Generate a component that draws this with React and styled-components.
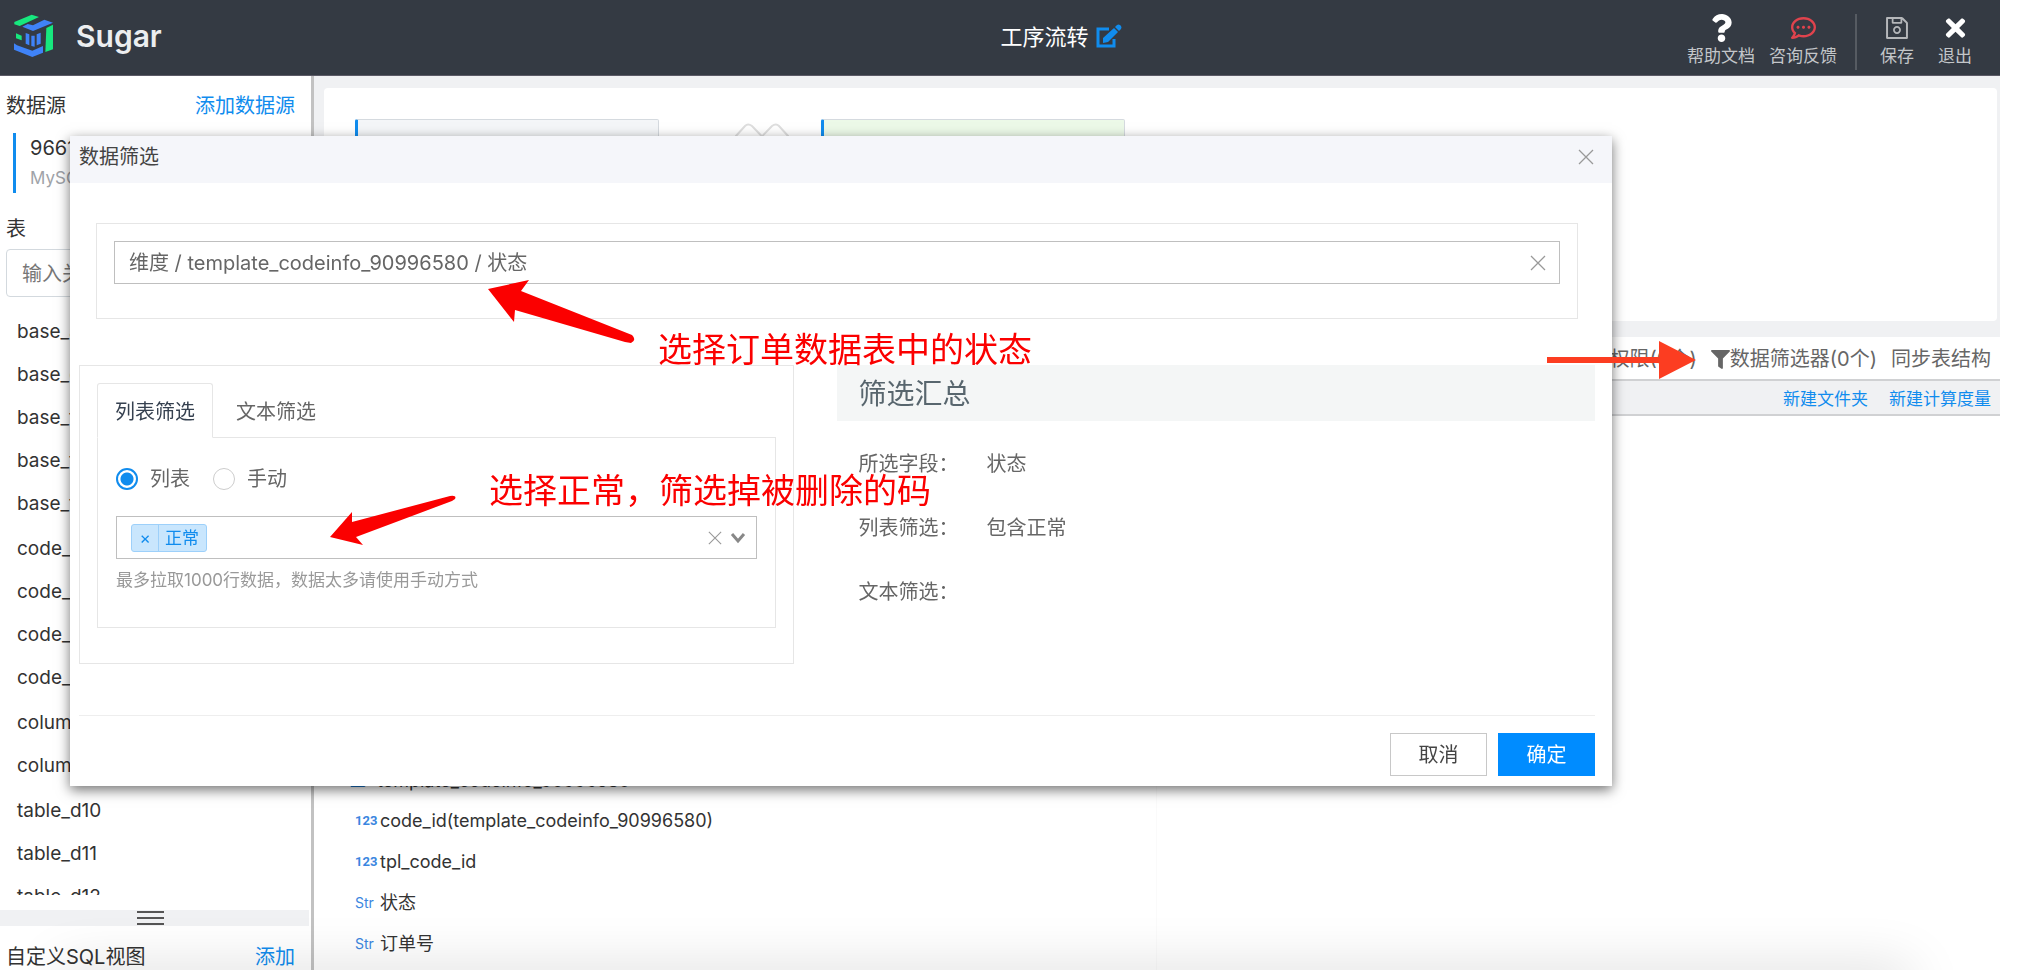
import React, { useState } from 'react';
import styled, { createGlobalStyle } from 'styled-components';
import { FaQuestion, FaRegCommentDots, FaTimes, FaFilter, FaFolderOpen } from 'react-icons/fa';
import { AiOutlineSave } from 'react-icons/ai';

const BLUE = '#108cee';

const GlobalStyle = createGlobalStyle`
  * { box-sizing: border-box; }
  body {
    margin: 0;
    background: #fff;
    color: #333;
    font-family: Inter, "Noto Sans CJK SC", sans-serif;
    font-size: 20px;
    line-height: 28px;
  }
  button, input { font: inherit; color: inherit; }
  button { padding: 0; border: 0; background: none; cursor: pointer; }
  a { color: ${BLUE}; text-decoration: none; }
  ul { margin: 0; padding: 0; list-style: none; }
  h1, h2, h3, p, dl, dd { margin: 0; font-weight: 400; }
`;

const Shell = styled.div`
  display: flex;
  flex-direction: column;
  height: 100vh;
  margin-right: 20px;
  overflow: hidden;
`;

/* ---------- top bar ---------- */

const TopBar = styled.header`
  display: grid;
  grid-template-columns: 1fr auto 1fr;
  align-items: center;
  flex: none;
  height: 76px;
  background: #343a43;
  border-bottom: 1px solid #5b5a66;
  color: #fff;
`;

const Brand = styled.div`
  display: flex;
  align-items: center;
  gap: 22px;
  padding: 0 0 4px 13px;
  font-size: 30px;
  font-weight: 600;
  color: #eceef0;
`;

const PageTitle = styled.h1`
  display: flex;
  align-items: center;
  gap: 6px;
  padding: 0 0 2px 122px;
  font-size: 22px;
`;

const Actions = styled.nav`
  display: flex;
  justify-content: flex-end;
  gap: 14px;
  padding: 8px 27px 0 0;
`;

const Action = styled.button`
  display: flex;
  flex-direction: column;
  align-items: center;
  min-width: 36px;
  font-size: 17px;
  line-height: 28px;
  color: #c3c6c9;
  margin-left: ${(p) => (p.$spaced ? 8 : 0)}px;
  svg { height: 28px; color: ${(p) => p.$tint || '#fff'}; }
`;

const Separator = styled.span`
  width: 2px;
  height: 56px;
  margin: 0 0 0 4px;
  background: #565b62;
`;

/* ---------- sidebar ---------- */

const Body = styled.div`
  display: flex;
  flex: 1;
  min-height: 0;
`;

const Sidebar = styled.aside`
  display: flex;
  flex-direction: column;
  flex: none;
  width: 314px;
  border-right: 3px solid #c2c2c2;
`;

const SideHeading = styled.div`
  display: flex;
  justify-content: space-between;
  padding: ${(p) => p.$top}px 16px 0 6px;
`;

const Source = styled.div`
  margin: 13px 0 22px 13px;
  padding: 0 0 0 14px;
  border-left: 3px solid ${BLUE};
  line-height: 30px;
  small { display: block; font-size: 17px; line-height: 30px; color: #a0a3a8; }
`;

const Search = styled.input`
  margin: 6px 15px 13px 6px;
  height: 48px;
  padding: 2px 15px 0;
  border: 1px solid #d3d9de;
  border-radius: 4px;
  outline: none;
  &::placeholder { color: #777; opacity: 1; }
`;

const Tables = styled.div`
  display: flex;
  flex-direction: column;
  gap: 2px;
  flex: 1;
  min-height: 0;
  padding-left: 17px;
  margin-bottom: 15px;
  overflow: hidden;
  font-size: 19px;
  li { height: 43px; line-height: 43px; }
`;

const Handle = styled.div`
  display: flex;
  flex: none;
  flex-direction: column;
  align-items: center;
  justify-content: center;
  gap: 4px;
  height: 16px;
  margin-right: 2px;
  padding-right: 8px;
  background: #f0f1f3;
  i { width: 27px; height: 2px; background: #555; }
`;

const SqlViews = styled.div`
  display: flex;
  flex: none;
  justify-content: space-between;
  height: 44px;
  padding: 17px 16px 0 6px;
`;

/* ---------- work area ---------- */

const Work = styled.main`
  display: flex;
  flex: 1;
  flex-direction: column;
  min-width: 0;
`;

const CanvasFrame = styled.div`
  flex: none;
  padding: 12px 3px 16px 10px;
  background: #f0f1f3;
`;

const Canvas = styled.div`
  display: flex;
  align-items: flex-start;
  height: 233px;
  padding: 31px;
  border-radius: 4px;
  background: #fff;
`;

const Node = styled.div`
  width: 304px;
  height: 44px;
  border: 1px solid #d5dadf;
  border-left: 3px solid ${BLUE};
  border-radius: 2px;
  background: ${(p) => p.$fill};
`;

const JoinMark = styled.svg`
  width: 54px;
  height: 30px;
  margin: 4px 32px 0 76px;
`;

const Tools = styled.div`
  display: flex;
  flex: none;
  align-items: center;
  justify-content: flex-end;
  gap: 14px;
  height: 42px;
  padding: 2px 9px 0;
  color: #666;
  button { display: flex; align-items: center; }
`;

const SubTools = styled.div`
  display: flex;
  flex: none;
  align-items: center;
  justify-content: flex-end;
  gap: 21px;
  height: 37px;
  padding: 2px 9px 0;
  border: solid #d0d1d3;
  border-width: 2px 0;
  background: #f0f1f3;
  font-size: 17px;
`;

const Columns = styled.div`
  display: grid;
  grid-template-columns: 1fr 1fr;
  flex: 1;
  min-height: 0;
`;

const Fields = styled.ul`
  padding: 345px 0 0 41px;
  border-right: 1px solid #fafafa;
  font-size: 18px;
`;

const Field = styled.li`
  display: flex;
  align-items: center;
  gap: 5px;
  height: ${(p) => (p.$root ? 39 : 41)}px;
  margin-left: ${(p) => (p.$root ? -5 : 0)}px;
  svg { margin-right: 4px; color: #1874c9; }
`;

const TypeMark = styled.span`
  width: 20px;
  color: #3b86e0;
  font-family: ${(p) => (p.$number ? 'Roboto' : 'Inter')}, sans-serif;
  font-size: ${(p) => (p.$number ? 13 : 14)}px;
  font-weight: ${(p) => (p.$number ? 700 : 400)};
`;

/* ---------- dialog ---------- */

const Layer = styled.div`
  position: fixed;
  inset: 0;
  padding: 136px 408px 0 70px;
`;

const Dialog = styled.section`
  display: flex;
  flex-direction: column;
  background: #fff;
  box-shadow: 0 4px 12px rgba(0, 0, 0, 0.55);
  color: #666;
`;

const DialogHead = styled.header`
  display: flex;
  align-items: center;
  justify-content: space-between;
  height: 47px;
  padding: 0 18px 6px 9px;
  background: #f5f6fa;
  color: #444;
`;

const DialogTitle = styled.h2`
  font-size: 20px;
`;

const FieldFrame = styled.div`
  margin: 40px 34px 46px 26px;
  padding: 17px 17px 34px;
  border: 1px solid #e6e6e6;
`;

const Control = styled.div`
  display: flex;
  align-items: center;
  gap: 8px;
  height: 43px;
  padding: 0 ${(p) => p.$end}px 0 14px;
  border: 1px solid #bfbfbf;
  input { flex: 1; min-width: 0; padding: 0; border: 0; outline: none; background: none; }
`;

const IconButton = styled.button`
  display: flex;
  flex: none;
  color: #999;
`;

const Split = styled.div`
  display: grid;
  grid-template-columns: 715fr 757fr;
  gap: 43px;
  margin: 0 17px 0 9px;
`;

const FilterFrame = styled.div`
  height: 299px;
  padding: 17px;
  border: 1px solid #e6e6e6;
`;

const TabRow = styled.div`
  display: flex;
`;

const Tab = styled.button`
  position: relative;
  height: 55px;
  padding: 2px 17px 0;
  border: 1px solid ${(p) => (p.$on ? '#e6e6e6' : 'transparent')};
  border-bottom-color: ${(p) => (p.$on ? '#fff' : 'transparent')};
  border-radius: 3px 3px 0 0;
  margin: 0 5px -1px 0;
  background: ${(p) => (p.$on ? '#fff' : 'none')};
  color: ${(p) => (p.$on ? '#364150' : '#666')};
`;

const TabPanel = styled.div`
  height: 191px;
  padding: 27px 18px 0;
  border: 1px solid #e6e6e6;
`;

const Radios = styled.div`
  display: flex;
  gap: 23px;
  height: 28px;
  margin-bottom: 23px;
`;

const RadioLabel = styled.label`
  display: flex;
  align-items: center;
  gap: 12px;
  input {
    width: 22px;
    height: 22px;
    margin: 0;
    appearance: none;
    border: 1px solid #ccc;
    border-radius: 50%;
  }
  input:checked { border: 2px solid ${BLUE}; background: radial-gradient(${BLUE} 0 6px, #fff 7px); }
`;

const Chip = styled.span`
  display: flex;
  flex: none;
  align-items: center;
  height: 28px;
  border: 1px solid #9dd0fa;
  border-radius: 3px;
  background: #c9e6fd;
  color: ${BLUE};
  font-size: 17px;
  line-height: 26px;
  button { width: 27px; height: 26px; border-right: 1px solid #9dd0fa; font-size: 17px; }
  span { padding: 0 7px 0 6px; }
`;

const Hint = styled.p`
  margin-top: 7px;
  font-size: 17px;
  color: #999;
`;

const SummaryTitle = styled.h3`
  height: 56px;
  padding: 1px 0 0 21px;
  background: #f4f6f6;
  font-size: 28px;
  line-height: 56px;
  color: #58666e;
`;

const SummaryList = styled.dl`
  display: grid;
  grid-template-columns: 128px 1fr;
  grid-auto-rows: 64px;
  align-items: center;
  padding: 11px 0 0 21px;
`;

const DialogFoot = styled.footer`
  display: flex;
  justify-content: flex-end;
  gap: 11px;
  margin: 51px 17px 0 9px;
  padding: 17px 0 10px;
  border-top: 1px solid #eee;
`;

const FootButton = styled.button`
  width: 97px;
  height: 43px;
  border: 1px solid ${(p) => (p.$primary ? '#008cff' : '#c8c8c8')};
  background: ${(p) => (p.$primary ? '#008cff' : '#fff')};
  color: ${(p) => (p.$primary ? '#fff' : '#444')};
`;

/* ---------- annotations drawn over the page ---------- */

const Marks = styled.svg`
  position: fixed;
  top: 0;
  left: 0;
  width: 1720px;
  height: 600px;
  pointer-events: none;
`;

const Note = styled.p`
  position: fixed;
  left: ${(p) => p.$x}px;
  top: ${(p) => p.$y}px;
  font-size: 34px;
  line-height: 48px;
  white-space: nowrap;
  color: #fb0000;
  pointer-events: none;
`;

const BottomShade = styled.div`
  position: fixed;
  left: 60px;
  right: 110px;
  bottom: -30px;
  height: 30px;
  box-shadow: 0 0 54px rgba(0, 0, 0, 0.17);
  pointer-events: none;
`;

const Cross = ({ size = 16 }) => (
  <svg width={size} height={size} viewBox="0 0 16 16" fill="none" stroke="currentColor" strokeWidth="1.3" aria-hidden="true">
    <path d="M1 1 15 15M15 1 1 15" />
  </svg>
);

const Logo = () => (
  <svg width="41" height="44" viewBox="40 40 123 132" aria-hidden="true">
    <path fill="#17e87e" d="M44 64 96 42 118 49 60 76 44 71Z" />
    <path fill="#3f83f8" d="M68 78 84 70 100 74 134 57 160 66 100 91Z" />
    <path fill="#17e87e" d="M140 82 160 72V146L137 154Z" />
    <path fill="#17e87e" d="M49 98 66 105V119L49 113Z" />
    <path fill="#3f83f8" d="M78 97 89 101V134L78 129ZM95 105H105V138L95 136ZM111 101 123 96V129L111 134Z" />
    <path fill="#3f83f8" d="M43 128 52 134 98 150 130 136V156L98 169 43 147Z" />
  </svg>
);

const EditMark = () => (
  <svg width="27" height="25" viewBox="0 0 27 25" aria-hidden="true">
    <path fill="none" stroke="#108cee" strokeWidth="3" d="M14 5H3V22H19V15" />
    <path fill="#108cee" d="M8 19V14L19 4 23 8 13 18ZM20 3 22 1Q23.500 0 25 1L26 2Q27 3.500 26 5L24 7Z" />
  </svg>
);

const tableGroups = [
  ['base_address', 'base_client', 'base_tag', 'base_team', 'base_type'],
  ['code_batch', 'code_info', 'code_list', 'code_type'],
  ['column_info', 'column_type'],
  ['table_d10', 'table_d11', 'table_d12'],
];

const fields = [
  { type: '123', name: 'code_id(template_codeinfo_90996580)' },
  { type: '123', name: 'tpl_code_id' },
  { type: 'Str', name: '状态' },
  { type: 'Str', name: '订单号' },
];

const summary = [
  ['所选字段：', '状态'],
  ['列表筛选：', '包含正常'],
  ['文本筛选：', ''],
];

function FilterDialog() {
  const [mode, setMode] = useState('list');
  return (
    <Layer>
      <Dialog role="dialog" aria-labelledby="filter-title">
        <DialogHead>
          <DialogTitle id="filter-title">数据筛选</DialogTitle>
          <IconButton aria-label="关闭"><Cross /></IconButton>
        </DialogHead>
        <FieldFrame>
          <Control $end={13}>
            <input aria-label="字段" readOnly value="维度 / template_codeinfo_90996580 / 状态" />
            <IconButton aria-label="清除字段"><Cross /></IconButton>
          </Control>
        </FieldFrame>
        <Split>
          <FilterFrame>
            <TabRow role="tablist">
              <Tab role="tab" aria-selected="true" $on>列表筛选</Tab>
              <Tab role="tab" aria-selected="false">文本筛选</Tab>
            </TabRow>
            <TabPanel role="tabpanel">
              <Radios>
                <RadioLabel>
                  <input type="radio" name="mode" checked={mode === 'list'} onChange={() => setMode('list')} />
                  列表
                </RadioLabel>
                <RadioLabel>
                  <input type="radio" name="mode" checked={mode === 'manual'} onChange={() => setMode('manual')} />
                  手动
                </RadioLabel>
              </Radios>
              <Control $end={10}>
                <Chip><button aria-label="移除正常">×</button><span>正常</span></Chip>
                <input role="combobox" aria-expanded="false" aria-label="筛选值" />
                <IconButton aria-label="清除筛选值"><Cross size={14} /></IconButton>
                <IconButton aria-label="展开">
                  <svg width="16" height="12" viewBox="0 0 16 12" fill="none" stroke="#888" strokeWidth="3" aria-hidden="true">
                    <path d="M2 2 8 9 14 2" />
                  </svg>
                </IconButton>
              </Control>
              <Hint>最多拉取1000行数据，数据太多请使用手动方式</Hint>
            </TabPanel>
          </FilterFrame>
          <div>
            <SummaryTitle>筛选汇总</SummaryTitle>
            <SummaryList>
              {summary.map(([label, value]) => (
                <React.Fragment key={label}>
                  <dt>{label}</dt>
                  <dd>{value}</dd>
                </React.Fragment>
              ))}
            </SummaryList>
          </div>
        </Split>
        <DialogFoot>
          <FootButton>取消</FootButton>
          <FootButton $primary>确定</FootButton>
        </DialogFoot>
      </Dialog>
    </Layer>
  );
}

export default function App() {
  return (
    <>
      <GlobalStyle />
      <Shell>
        <TopBar>
          <Brand><Logo />Sugar</Brand>
          <PageTitle>工序流转<IconButton aria-label="编辑名称"><EditMark /></IconButton></PageTitle>
          <Actions>
            <Action><FaQuestion size={25} />帮助文档</Action>
            <Action $tint="#e0434d"><FaRegCommentDots size={25} />咨询反馈</Action>
            <Separator />
            <Action $spaced $tint="#b5b7ba"><AiOutlineSave size={28} />保存</Action>
            <Action $spaced><FaTimes size={23} />退出</Action>
          </Actions>
        </TopBar>
        <Body>
          <Sidebar>
            <SideHeading $top={16}><span>数据源</span><a href="#add-source">添加数据源</a></SideHeading>
            <Source>9661<small>MySQL</small></Source>
            <SideHeading $top={0}><label htmlFor="table-search">表</label></SideHeading>
            <Search id="table-search" placeholder="输入关键字" />
            <Tables>
              {tableGroups.map((group) => (
                <ul key={group[0]}>
                  {group.map((name) => <li key={name}>{name}</li>)}
                </ul>
              ))}
            </Tables>
            <Handle><i /><i /><i /></Handle>
            <SqlViews><span>自定义SQL视图</span><a href="#add-view">添加</a></SqlViews>
          </Sidebar>
          <Work>
            <CanvasFrame>
              <Canvas>
                <Node $fill="#f4f6f8" />
                <JoinMark viewBox="0 0 54 30" fill="none" stroke="#dedede" strokeWidth="2">
                  <path d="M0 14 10 3Q13 0 17 3L41 28M13 28 37 3Q41 0 44 3L54 14" />
                </JoinMark>
                <Node $fill="#ecf9e8" />
              </Canvas>
            </CanvasFrame>
            <Tools>
              <button>行权限(0个)</button>
              <button><FaFilter size={19} />数据筛选器(0个)</button>
              <button>同步表结构</button>
            </Tools>
            <SubTools>
              <a href="#new-folder">新建文件夹</a>
              <a href="#new-measure">新建计算度量</a>
            </SubTools>
            <Columns>
              <Fields>
                <Field $root><FaFolderOpen size={18} />template_codeinfo_90996580</Field>
                {fields.map((field) => (
                  <Field key={field.name}>
                    <TypeMark $number={field.type === '123'}>{field.type}</TypeMark>
                    {field.name}
                  </Field>
                ))}
              </Fields>
            </Columns>
          </Work>
        </Body>
      </Shell>
      <BottomShade />
      <FilterDialog />
      <Marks viewBox="0 0 1720 600" aria-hidden="true">
        <path fill="#fb0000" d="M488 289 529 280 521 291 632 335Q637 340 631 343L625 342 515 310 514 322Z" />
        <path fill="#fb0000" d="M330 537 352 512V522L450 496Q457 495 455 499L452 501 356 537 363 545Z" />
        <path fill="#fc3d21" d="M1547 357H1659V341L1696 360 1659 379V363H1547Z" />
      </Marks>
      <Note $x={658} $y={326}>选择订单数据表中的状态</Note>
      <Note $x={489} $y={467}>选择正常，筛选掉被删除的码</Note>
    </>
  );
}
